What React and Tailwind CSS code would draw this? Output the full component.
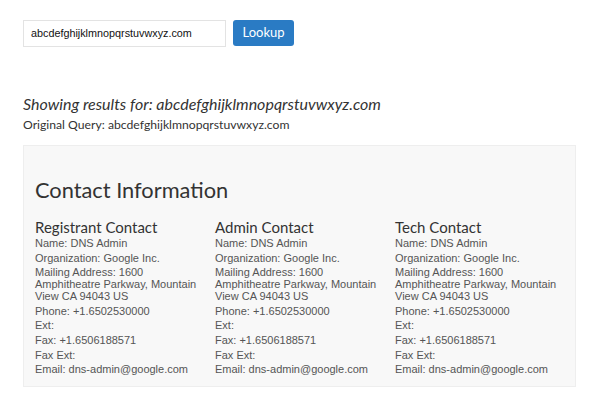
export default function App() {
  const contacts = ["Registrant Contact", "Admin Contact", "Tech Contact"];
  const lato = { fontFamily: "Lato, 'Open Sans', sans-serif" };
  return (
    <div className="w-[600px] h-[400px] bg-white text-[#333] overflow-hidden" style={{ fontFamily: "'Liberation Sans', Arial, sans-serif" }}>
      <div className="pl-[23px] pt-[20px] flex gap-[7px]">
        <div className="w-[203px] h-[27px] border border-[#e3e3e3] flex items-center pl-[7px] text-[10.8px] text-[#111]">abcdefghijklmnopqrstuvwxyz.com</div>
        <div className="w-[61px] h-[26px] bg-[#2a7bc4] rounded-[3px] text-white text-[13px] flex items-center justify-center" style={lato}>Lookup</div>
      </div>
      <div className="pl-[23px] pt-[46px]" style={lato}>
        <div className="italic text-[16px] leading-[22px] text-[#333]">Showing results for: abcdefghijklmnopqrstuvwxyz.com</div>
        <div className="text-[12.2px] leading-[16px] mt-[2px] text-[#333]">Original Query: abcdefghijklmnopqrstuvwxyz.com</div>
      </div>
      <div className="ml-[23px] mt-[12px] w-[553px] h-[242px] bg-[#f8f8f8] border border-[#eeeeee] pl-[11px] pt-[30px]">
        <div className="text-[21.8px] leading-[28px] text-[#333]" style={lato}>Contact Information</div>
        <div className="flex mt-[14px]">
          {contacts.map((c) => (
            <div key={c} className="w-[180px] pr-[15px]">
              <div className="text-[15px] leading-[18px] text-[#333]" style={lato}>{c}</div>
              <div className="text-[11px] leading-[12px] text-[#555] flex flex-col gap-[2.6px] mt-[1px]">
                <div>Name: DNS Admin</div>
                <div>Organization: Google Inc.</div>
                <div>Mailing Address: 1600 Amphitheatre Parkway, Mountain View CA 94043 US</div>
                <div>Phone: +1.6502530000</div>
                <div>Ext:</div>
                <div>Fax: +1.6506188571</div>
                <div>Fax Ext:</div>
                <div>Email: dns-admin@google.com</div>
              </div>
            </div>
          ))}
        </div>
      </div>
    </div>
  );
}
